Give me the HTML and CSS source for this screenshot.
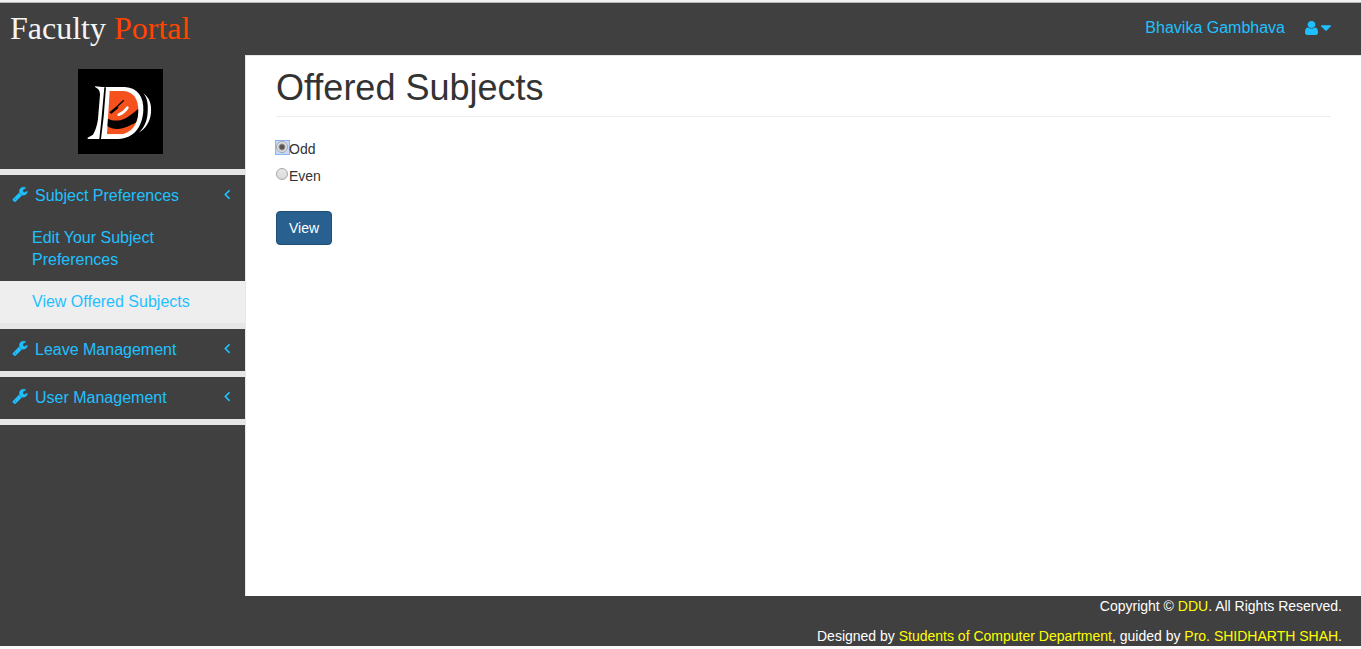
FILE: index.html
```html
<!DOCTYPE html>
<html lang="en">
<head>
<meta charset="utf-8">
<title>Faculty Portal</title>
<link rel="stylesheet" href="styles.css">
</head>
<body>
<svg class="sprite" aria-hidden="true">
  <symbol id="wrench" viewBox="0 0 1792 1792"><path stroke="currentColor" stroke-width="50" d="M448 1472q0-26-19-45t-45-19-45 19-19 45 19 45 45 19 45-19 19-45zm644-420l-682 682q-37 37-90 37-52 0-91-37l-106-108q-38-36-38-90 0-53 38-91l681-681q39 98 114.500 173.500t173.500 114.500zm634-435q0 39-23 106-47 134-164.500 217.500t-258.500 83.500q-185 0-316.500-131.500t-131.500-316.500 131.500-316.500 316.500-131.500q58 0 121.500 16.500t107.500 46.500q16 11 16 28t-16 28l-293 169v224l193 107q5-3 79-48.500t135.500-81 70.500-35.500q15 0 23.500 10t8.500 25z"/></symbol>
  <symbol id="angle" viewBox="0 0 1792 1792"><path stroke="currentColor" stroke-width="70" d="M1203 544q0 13-10 23l-393 393 393 393q10 10 10 23t-10 23l-50 50q-10 10-23 10t-23-10l-466-466q-10-10-10-23t10-23l466-466q10-10 23-10t23 10l50 50q10 10 10 23z"/></symbol>
</svg>
<header class="topbar">
  <a class="brand" href="#">Faculty <span class="brand-accent">Portal</span></a>
  <div class="account">
    <a href="#">Bhavika Gambhava</a>
    <button class="user-menu" type="button" aria-label="User menu">
      <svg class="user-icon" viewBox="256 128 1280 1536" preserveAspectRatio="none"><path d="M1536 1399q0 109-62.500 187t-150.500 78h-854q-88 0-150.500-78t-62.500-187q0-85 8.500-160.500t31.500-152 58.500-131 94-89 134.500-34.500q131 128 313 128t313-128q76 0 134.500 34.500t94 89 58.500 131 31.500 152 8.500 160.500zm-256-887q0 159-112.500 271.500t-271.500 112.500-271.500-112.500-112.500-271.500 112.500-271.500 271.500-112.500 271.500 112.500 112.500 271.500z"/></svg>
      <svg class="caret-icon" viewBox="384 640 1024 576"><path d="M1408 704q0 26-19 45l-448 448q-19 19-45 19t-45-19l-448-448q-19-19-19-45t19-45 45-19h896q26 0 45 19t19 45z"/></svg>
    </button>
  </div>
</header>
<div class="layout">
  <nav class="sidebar">
    <div class="logo-box">
      <svg class="logo" viewBox="24 27 255 255" role="img" aria-label="DDU logo">
        <defs><clipPath id="bowl"><path d="M119 93H160C190 94 206 118 205 155C203 195 183 222 148 223H111Z"/></clipPath></defs>
        <path fill="#000" d="M24 27h255v255H24z"/>
        <path fill="#fff" d="M75 79L97 81H165C203 83 222 111 220 151C217 204 190 235 145 237H53V233L69 224C75 214 82 195 84 176L90 104C90 93 86 86 75 81Z"/>
        <path fill="#000" d="M103 82H108L101 170L93 237H88L95 170Z"/>
        <g clip-path="url(#bowl)">
          <path fill="#f4511c" d="M105 90h110v140H105z"/>
          <path fill="#000" d="M111 174C125 184 147 184 164 176C180 168 192 157 207 145V185C190 189 178 199 158 205C138 210 123 205 111 198Z"/>
          <path fill="none" stroke="#000" stroke-width="4" stroke-linecap="round" d="M160 122L141 140L121 157M143 143L124 159"/>
          <path fill="none" stroke="#fff" stroke-width="8" stroke-linecap="round" d="M172 143C165 154 156 160 146 164"/>
        </g>
        <path fill="#fff" d="M220 100C238 113 245 132 243 158C240 187 226 206 207 217C225 199 232 181 233 155C235 131 231 113 220 100Z"/>
      </svg>
    </div>
    <section class="menu">
      <a class="menu-head" href="#"><svg class="icon"><use href="#wrench"/></svg><span class="menu-label">Subject Preferences</span><svg class="icon"><use href="#angle"/></svg></a>
      <a class="menu-sub" href="#">Edit Your Subject Preferences</a>
      <a class="menu-sub active" href="#">View Offered Subjects</a>
    </section>
    <section class="menu">
      <a class="menu-head" href="#"><svg class="icon"><use href="#wrench"/></svg><span class="menu-label">Leave Management</span><svg class="icon"><use href="#angle"/></svg></a>
    </section>
    <section class="menu">
      <a class="menu-head" href="#"><svg class="icon"><use href="#wrench"/></svg><span class="menu-label">User Management</span><svg class="icon"><use href="#angle"/></svg></a>
    </section>
  </nav>
  <main class="content">
    <h1 class="page-title">Offered Subjects</h1>
    <form>
      <div class="options">
        <label class="option"><span class="radio-frame focused"><input class="radio" type="radio" name="term" value="odd" checked></span>Odd</label>
        <label class="option"><span class="radio-frame"><input class="radio" type="radio" name="term" value="even"></span>Even</label>
      </div>
      <button class="view-button" type="button">View</button>
    </form>
  </main>
</div>
<footer class="footer">
  <p>Copyright © <a href="#">DDU</a>. All Rights Reserved.</p>
  <p>Designed by <a href="#">Students of Computer Department</a>, guided by <a href="#">Pro. SHIDHARTH SHAH</a>.</p>
</footer>
</body>
</html>
```
FILE: styles.css
```css
* { box-sizing: border-box; }
body {
  margin: 0;
  min-height: 100vh;
  display: flex;
  flex-direction: column;
  background: #404040;
  border-top: 2px solid #f1f1f1;
  border-bottom: 3px solid #faf8f8;
  color: #333;
  font: 14px/20px "Liberation Sans", Arial, sans-serif;
}
a { color: #1fc0ff; text-decoration: none; }
svg { display: block; flex: none; fill: currentColor; }
.sprite { position: absolute; width: 0; height: 0; }

.topbar {
  display: flex;
  align-items: flex-start;
  justify-content: space-between;
  min-height: 53px;
  padding: 0 30px 0 10px;
  border-top: 1px solid #b8b8b8;
}
.brand { color: #f5f5f5; font: 32px/50px "Liberation Serif", "Times New Roman", serif; }
.brand-accent { color: #ff4500; }
.account { display: flex; align-items: center; gap: 20px; font-size: 16px; line-height: 50px; }
.user-menu {
  display: flex;
  align-items: center;
  gap: 3px;
  padding: 0;
  border: 0;
  background: none;
  color: #1fc0ff;
}
.user-icon { width: 13px; height: 14px; }
.caret-icon { width: 10px; height: 6px; }

.layout { flex: 1; display: flex; }
.sidebar { flex: none; width: 246px; border-right: 1px solid #e7e7e7; font-size: 16px; line-height: 22px; }
.logo-box {
  display: flex;
  justify-content: center;
  padding: 14px 4px 15px 0;
  border-bottom: 6px solid #e6e6e6;
}
.logo { width: 85px; height: 85px; }
.menu { border-bottom: 6px solid #e6e6e6; }
.menu-head { display: flex; align-items: flex-start; padding: 10px 10px 10px 12px; }
.menu-label { flex: 1; padding-left: 7px; }
.icon { width: 16px; height: 16px; margin-top: 1px; }
.menu-sub { display: block; padding: 10px 32px; }
.menu-sub.active { background: #eee; }

.content { flex: 1; padding: 12px 30px; background: #fff; border-top: 1px solid #e7e7e7; }
.page-title {
  margin: 0 0 22px;
  padding-bottom: 8px;
  border-bottom: 1px solid #eee;
  font-size: 36px;
  font-weight: 400;
  line-height: 40px;
}
.options { display: flex; flex-direction: column; align-items: flex-start; gap: 7px; margin-bottom: 25px; }
.option { display: flex; align-items: flex-start; }
.radio-frame { display: flex; margin-top: 2px; }
.radio-frame.focused { outline: 1px solid #8ab4f2; background: #c4dafa; }
.radio {
  appearance: none;
  width: 12px;
  height: 12px;
  margin: 0 1px 1px 0;
  border: 1px solid #a6a6a6;
  border-radius: 50%;
  outline: 0;
  background: linear-gradient(#e8e8e8, #dadada);
}
.radio:checked { background: radial-gradient(circle, #555 0 2px, #e2e2e2 4px); }
.view-button {
  padding: 6px 12px;
  border: 1px solid #204d74;
  border-radius: 4px;
  background: #286090;
  color: #fff;
  font: inherit;
}

.footer { display: flex; flex-direction: column; gap: 10px; padding: 0 19px; color: #fff; text-align: right; }
.footer p { margin: 0; }
.footer a { color: #ff0; }
```
